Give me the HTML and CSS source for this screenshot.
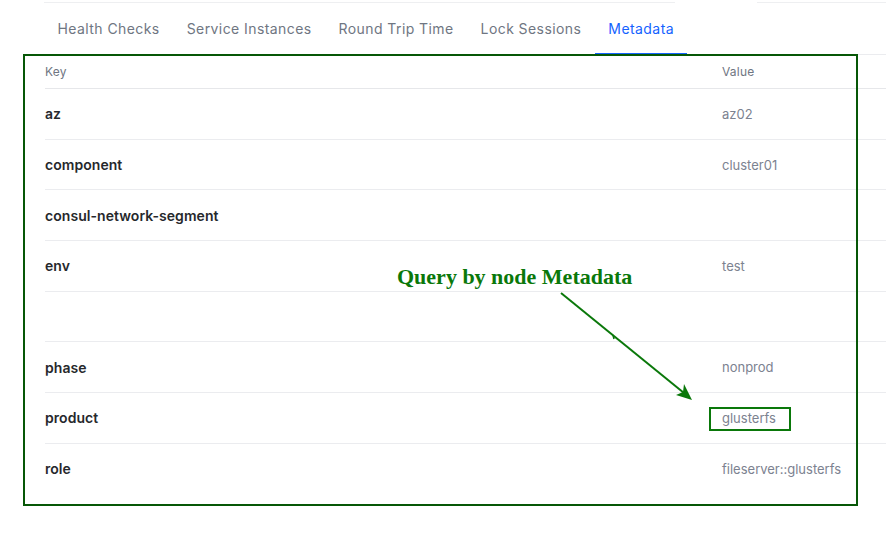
FILE: index.html
```html
<!DOCTYPE html>
<html>
<head>
<meta charset="utf-8">
<link rel="stylesheet" href="styles.css">
</head>
<body>
<div class="page">
  <div class="topline"><span class="seg seg-a"></span><span class="seg seg-b"></span></div>
  <nav class="tabs">
    <a class="tab">Health Checks</a>
    <a class="tab">Service Instances</a>
    <a class="tab">Round Trip Time</a>
    <a class="tab">Lock Sessions</a>
    <a class="tab active">Metadata</a>
  </nav>
  <table class="meta">
    <thead>
      <tr><th class="k">Key</th><th class="v">Value</th></tr>
    </thead>
    <tbody>
      <tr><td class="k">az</td><td class="v">az02</td></tr>
      <tr><td class="k">component</td><td class="v">cluster01</td></tr>
      <tr><td class="k">consul-network-segment</td><td class="v"></td></tr>
      <tr><td class="k">env</td><td class="v">test</td></tr>
      <tr><td class="k"></td><td class="v"></td></tr>
      <tr><td class="k">phase</td><td class="v">nonprod</td></tr>
      <tr><td class="k">product</td><td class="v">glusterfs</td></tr>
      <tr><td class="k">role</td><td class="v">fileserver::glusterfs</td></tr>
    </tbody>
  </table>

  <div class="frame"></div>
  <div class="hilite"></div>
  <div class="note">Query by node Metadata</div>
  <svg class="arrow" width="886" height="544" viewBox="0 0 886 544">
    <line x1="561" y1="293" x2="684" y2="393" stroke="#0a780a" stroke-width="2"/>
    <path d="M692 400 L676 395 L683 392 L684 384 Z" fill="#0a780a"/>
    <path d="M613 335 L614 339" stroke="#0a780a" stroke-width="1.5"/>
  </svg>
</div>
</body>
</html>
```

FILE: styles.css
```css
html, body {
  margin: 0;
  padding: 0;
  background: #ffffff;
}
body {
  font-family: Inter, "Noto Sans", "DejaVu Sans", sans-serif;
  color: #1f2124;
}
.page {
  position: relative;
  width: 886px;
  height: 544px;
  overflow: hidden;
}
.topline {
  display: flex;
  gap: 82px;
  padding: 2px 0 0 44px;
}
.seg {
  display: block;
  height: 1px;
  background: #eeeff1;
}
.seg-a { width: 631px; }
.seg-b { flex: 1; }
.tabs {
  display: flex;
  margin-left: 44px;
  height: 52px;
  border-bottom: 1px solid #ebecef;
  box-sizing: border-box;
}
.tab {
  display: flex;
  align-items: center;
  padding: 0 13.5px;
  font-size: 14px;
  letter-spacing: 0.42px;
  color: #6f7682;
  border-bottom: 2px solid transparent;
  margin-bottom: -1px;
  box-sizing: border-box;
}
.tab.active {
  color: #1563ff;
  border-bottom-color: #1563ff;
}
.meta {
  margin-left: 45px;
  width: 841px;
  border-collapse: collapse;
}
.meta th {
  height: 33px;
  font-size: 12px;
  font-weight: 400;
  color: #6f7682;
  text-align: left;
  padding: 0;
  border-bottom: 1px solid #e6e7ea;
  letter-spacing: 0.2px;
}
.meta td {
  height: 49.7px;
  padding: 0;
  border-bottom: 1px solid #ebecef;
  vertical-align: middle;
}
.meta tbody tr:last-child td { border-bottom: none; }
.meta .k { width: 677px; }
.meta td.k {
  font-size: 14px;
  font-weight: 600;
  color: #26282c;
  letter-spacing: 0.05px;
}
.meta td.v {
  font-size: 13px;
  color: #7c8290;
  letter-spacing: 0;
}
.frame {
  position: absolute;
  left: 23px;
  top: 54px;
  width: 835px;
  height: 452px;
  border: 2px solid #075707;
  box-sizing: border-box;
}
.hilite {
  position: absolute;
  left: 709px;
  top: 407px;
  width: 82px;
  height: 24px;
  border: 2px solid #0a780a;
  box-sizing: border-box;
}
.note {
  position: absolute;
  left: 397px;
  top: 264px;
  font-family: "Liberation Serif", "Times New Roman", serif;
  font-weight: 700;
  font-size: 22px;
  color: #0a780a;
  white-space: nowrap;
}
.arrow {
  position: absolute;
  left: 0;
  top: 0;
  pointer-events: none;
}
```
